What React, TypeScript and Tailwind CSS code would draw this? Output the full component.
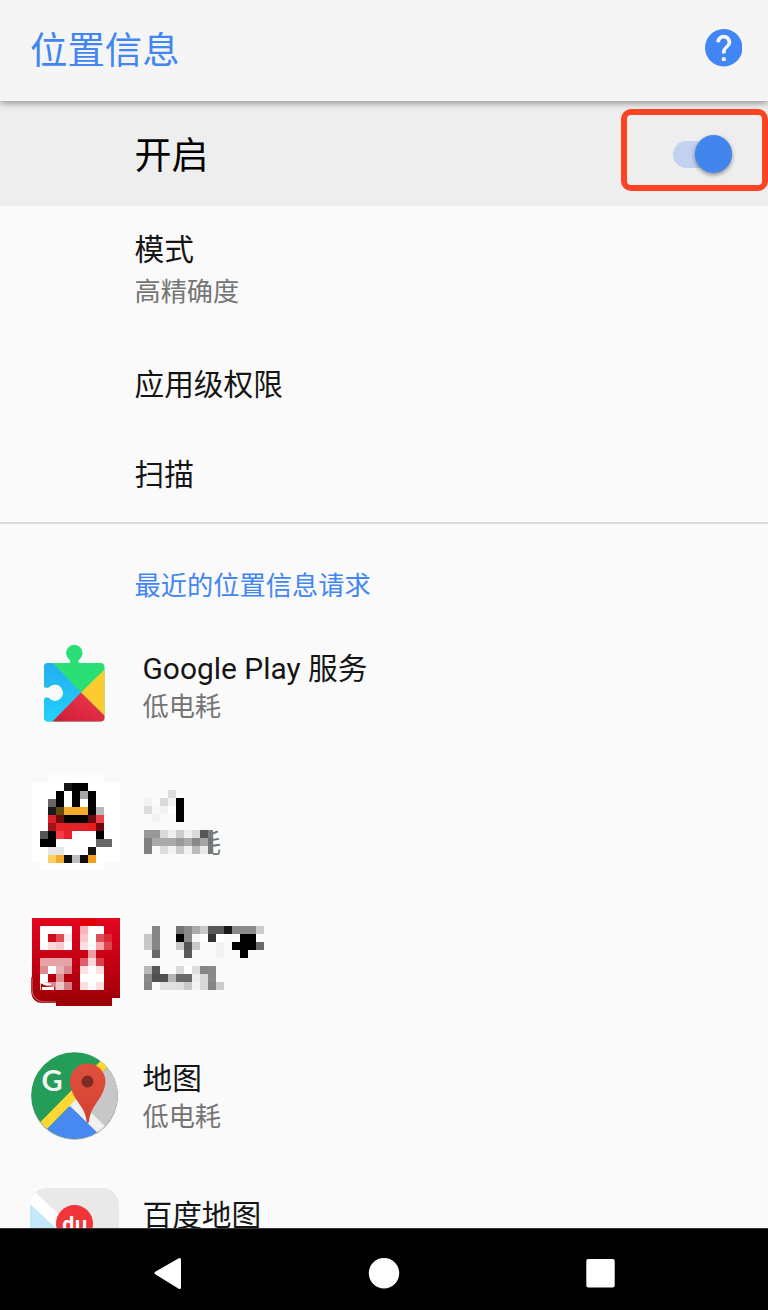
import React from "react";

type Cell = [number, string, number?];

/* Each row lists [column, colour, span] blocks on an 8px lattice. */
function Mosaic({ rows, cols }: { rows: Cell[][]; cols: number }) {
  return (
    <svg
      width={cols * 8}
      height={rows.length * 8}
      viewBox={`0 0 ${cols} ${rows.length}`}
      shapeRendering="crispEdges"
      className="block"
    >
      {rows.map((row, y) =>
        row.map(([x, fill, span = 1], i) => (
          <rect key={`${y}-${i}`} x={x} y={y} width={span} height={1} fill={fill} />
        )),
      )}
    </svg>
  );
}

const penguin: Cell[][] = [
  [[2, "#fefefe", 7]],
  [[0, "#fff", 11], [4, "#151515"], [5, "#000", 2]],
  [[0, "#fff", 11], [3, "#000"], [5, "#000"], [6, "#a5a5a5"], [7, "#000"]],
  [[0, "#fff", 11], [2, "#666"], [3, "#000"], [5, "#000"], [7, "#000"]],
  [[0, "#fff", 11], [2, "#1a1a1a"], [3, "#604a12"], [4, "#f5ab2b", 3], [7, "#000"], [8, "#b8b8b8"]],
  [[0, "#fff", 11], [2, "#dc2029"], [3, "#6a0b10"], [4, "#000", 3], [7, "#6a0b10"], [8, "#ee4148"]],
  [[0, "#fff", 11], [2, "#a31119"], [3, "#e4222a", 4], [7, "#f0181f"], [8, "#6f090d"]],
  [[0, "#fff", 11], [1, "#555"], [2, "#000"], [3, "#f23c48"], [4, "#e8202c"], [8, "#000"]],
  [[0, "#fff", 11], [1, "#000", 2], [8, "#686868", 2]],
  [[0, "#fff", 11], [2, "#e5e5e5", 2], [7, "#151515"]],
  [[0, "#fff", 11], [2, "#fbd064"], [3, "#f5ab2b"], [4, "#101010"], [5, "#bdbdbd"], [6, "#101010"], [7, "#f5a01b"]],
  [[1, "#fff", 8]],
];

const penguinTitle: Cell[][] = [
  [[3, "#dcdcdc"]],
  [[0, "#f3f3f3"], [2, "#dadada"], [3, "#f3f3f3"], [4, "#000"]],
  [[0, "#dcdcdc"], [1, "#f7f7f7"], [2, "#f3f3f3"], [3, "#fff"], [4, "#000"]],
  [[1, "#f3f3f3"], [4, "#000"]],
];

const penguinSub: Cell[][] = [
  [[0, "#989898", 2], [2, "#d8d8d8"], [3, "#eee"], [4, "#ccc"], [5, "#eee"], [6, "#dadada"], [7, "#565656"], [8, "#7e7e7e"]],
  [[0, "#808080"], [1, "#aaa", 3], [4, "#989898"], [5, "#aaa"], [6, "#898989"], [7, "#a5a5a5"], [8, "#757575"]],
  [[0, "#808080"], [1, "#fafafa"], [2, "#dcdcdc"], [3, "#f3f3f3"], [4, "#ccc"], [5, "#f0f0f0"], [6, "#bbb"], [7, "#e8e8e8"], [8, "#777"]],
];

const redTitle: Cell[][] = [
  [[1, "#858585"], [4, "#737373"], [5, "#8a8a8a"], [6, "#aaa"], [7, "#c8c8c8"], [8, "#575757", 2], [10, "#181818"], [11, "#8a8a8a", 3], [14, "#ccc"]],
  [[0, "#c8c8c8"], [1, "#858585"], [4, "#000"], [5, "#8a8a8a"], [6, "#f7f7f7"], [7, "#fff"], [8, "#353535"], [9, "#fff"], [12, "#000", 2]],
  [[0, "#c8c8c8"], [1, "#858585"], [4, "#c8c8c8"], [5, "#555"], [6, "#c8c8c8"], [9, "#f3f3f3"], [11, "#000", 3], [14, "#686868"]],
  [[1, "#686868"], [5, "#5a5a5a"], [9, "#f3f3f3"], [12, "#000"]],
];

const redSub: Cell[][] = [
  [[0, "#b8b8b8"], [1, "#575757"], [4, "#dadada"], [5, "#fff"], [6, "#dedede"], [7, "#858585"], [8, "#8a8a8a"]],
  [[0, "#8a8a8a"], [1, "#505050", 2], [3, "#b5b5b5"], [4, "#696969", 2], [6, "#eee"], [7, "#d8d8d8"], [8, "#8a8a8a"]],
  [[0, "#858585"], [2, "#e0e0e0", 2], [4, "#dedede"], [5, "#c8c8c8"], [6, "#f3f3f3"], [7, "#d8d8d8"], [8, "#858585"], [9, "#ccc"]],
];

const seal: Cell[][] = [
  [[6, "#e0000a", 2]],
  [[1, "#fff", 4], [6, "#f5b5ba"], [7, "#fff", 2]],
  [[1, "#fff"], [2, "#cf0c18"], [3, "#df4b54"], [4, "#fdeaec"], [6, "#f8c8cb"], [7, "#fff"], [8, "#df4b58"], [9, "#dc2835"]],
  [[1, "#fff"], [2, "#fbdadd"], [3, "#f7ccd0"], [4, "#fff"], [6, "#fce0e2"], [7, "#fff"], [8, "#f3a9ae"], [9, "#dd4450"]],
  [[7, "#ec9ba1"]],
  [[1, "#e6a3a7", 4], [6, "#df606a"], [7, "#f7d9db"], [8, "#d8404c"]],
  [[1, "#dc8b90"], [2, "#fff"], [3, "#e8b0b3"], [4, "#d8878c"], [6, "#fbdfe1"], [7, "#fff"], [8, "#fbdfe1"]],
  [[1, "#fff"], [2, "#b4000a"], [3, "#dc8b90"], [4, "#b4000a"], [6, "#fff", 3]],
  [[1, "#edc9cb"], [2, "#dc8b90"], [3, "#edc9cb"], [4, "#d47d82"], [6, "#f9dfe0"], [7, "#fff"], [8, "#f9dfe0"]],
];

function PlayServicesIcon() {
  return (
    <svg width="88" height="88" viewBox="0 0 88 88" className="block">
      <defs>
        <clipPath id="piece">
          <path d="M16 23h20.500c2 0 2.300-1.800 1-3.300a8.200 8.200 0 1 1 9.600 0c-1.300 1.500-1 3.300 1 3.300H68.500a4 4 0 0 1 4 4v50.500a4 4 0 0 1-4 4H16a4 4 0 0 1-4-4V60c0-2 1.500-2.500 4.500-2.200a8.200 8.200 0 1 0 0-10.200C13.500 48 12 47.500 12 45.500V27a4 4 0 0 1 4-4z" />
        </clipPath>
        <linearGradient id="blue" x1="0" y1="0" x2="0" y2="1">
          <stop offset="0" stopColor="#27a5ef" />
          <stop offset="1" stopColor="#20d9ff" />
        </linearGradient>
        <linearGradient id="red" x1="1" y1="0" x2="0" y2="1">
          <stop offset="0" stopColor="#f63b4c" />
          <stop offset="1" stopColor="#c91938" />
        </linearGradient>
      </defs>
      <g clipPath="url(#piece)">
        <path d="M0 0h88v88H0z" fill="#2adf76" />
        <path d="M10 12l39 40.500-39 41z" fill="url(#blue)" />
        <path d="M49 52.500L76 26v53z" fill="#fccb30" />
        <path d="M49 52.500L20 82v6h62v-3z" fill="url(#red)" />
      </g>
    </svg>
  );
}

function SealIcon() {
  return (
    <svg width="90" height="92" viewBox="-2 0 90 92" className="block">
      <defs>
        <linearGradient id="seal" x1="0" y1="0" x2="0" y2="1">
          <stop offset="0" stopColor="#e2071f" />
          <stop offset="0.500" stopColor="#c50014" />
          <stop offset="1" stopColor="#990005" />
        </linearGradient>
      </defs>
      <path d="M0 0h88v80h-8v8H24v-3H11Q-1 85-1 71V60l1-1z" fill="url(#seal)" />
      <path d="M-.5 48v11M0 60v12q1 12 14 12h10" fill="none" stroke="#efd7d7" strokeWidth=".5" />
      <g transform="scale(8)" shapeRendering="crispEdges">
        {seal.map((row, y) =>
          row.map(([x, fill, span = 1], i) => (
            <rect key={`${y}-${i}`} x={x} y={y} width={span} height={1} fill={fill} />
          )),
        )}
      </g>
      <path d="M9 65q5 4 14 4v4H9z" fill="#b4000a" />
      <path d="M10 69h12v3H10z" fill="#fff" />
      <path d="M8 64q5 3 11 2" fill="none" stroke="#fff" strokeWidth="1.500" />
    </svg>
  );
}

function MapsIcon() {
  return (
    <svg width="88" height="90" viewBox="0 0 88 90" className="block">
      <defs>
        <clipPath id="disc">
          <circle cx="43.500" cy="43.500" r="43.300" />
        </clipPath>
        <linearGradient id="pin" x1="0" y1="0" x2="0" y2="1">
          <stop offset="0" stopColor="#e0503f" />
          <stop offset="1" stopColor="#d5402f" />
        </linearGradient>
      </defs>
      <circle cx="43.500" cy="44.600" r="43.300" fill="#b4b9bf" />
      <g clipPath="url(#disc)">
        <path d="M0 0h88v88H0z" fill="#239d58" />
        <path d="M76 16l14-10v80H74L40 50z" fill="#c7c7c7" />
        <path d="M44 45l-8 8 32 34 10-9z" fill="#f0f0f0" />
        <path d="M39 54L12 81v9h64z" fill="#4889f1" />
        <path d="M6 73.500L73 5.500l7 6L14 79z" fill="#fdd835" />
      </g>
      <text x="10.500" y="38.500" fontSize="29" className="font-[Lato,sans-serif] font-bold" fill="#f4f5f4">G</text>
      <path d="M55.700 70c-.7-6-2.200-10-5-14.500C46 48 39 40 39 29.200a17.700 17.700 0 0 1 35.400 0C74.400 40 67 48 62.500 55.500 60 60 58.600 64 57.800 70c-.2 1.200-1.900 1.200-2.100 0z" fill="url(#pin)" />
      <circle cx="56.500" cy="29.500" r="6" fill="#7e2c28" />
    </svg>
  );
}

function BaiduIcon() {
  return (
    <svg width="90" height="41" viewBox="0 0 90 41" className="block">
      <defs>
        <clipPath id="tile">
          <rect width="89" height="90" rx="17" />
        </clipPath>
      </defs>
      <g clipPath="url(#tile)">
        <path d="M0 0h90v41H0z" fill="#e9e9e9" />
        <path d="M0 14l27 27H0z" fill="#c3e8fc" />
        <path d="M0-1l6 6 30 28-6 8h-3L0 16z" fill="#fff" />
      </g>
      <circle cx="44.500" cy="35.500" r="18.500" fill="#f4343b" />
      <text x="44.800" y="42.500" textAnchor="middle" fontSize="20" className="font-['Open_Sans',sans-serif] font-bold" fill="#fff">du</text>
    </svg>
  );
}

function AppRow({ icon, children }: { icon: React.ReactNode; children: React.ReactNode }) {
  return (
    <div className="flex h-[136.500px] shrink-0 items-start">
      <div className="w-[142.500px] shrink-0">{icon}</div>
      <div>{children}</div>
    </div>
  );
}

const titleText = "h-[40px] text-[29.700px] leading-[40px] whitespace-nowrap text-[#151515]";
const subText = "h-[36px] text-[26.200px] leading-[36px] whitespace-nowrap text-[#757575]";

export default function App() {
  return (
    <div className="flex h-[1310px] w-[768px] flex-col overflow-hidden bg-[#fafafa] font-['Noto_Sans_CJK_SC',sans-serif]">
      <header className="relative z-10 flex h-[101px] shrink-0 items-center justify-between bg-[#f5f5f5] pr-[26px] pb-[5px] pl-[30px] shadow-[0_2px_7px_rgba(0,0,0,0.4)]">
        <h1 className="mt-[-1px] text-[37.400px] leading-[54px] text-[#4285f4]">位置信息</h1>
        <svg width="37.500" height="37.500" viewBox="2 2 20 20" className="block">
          <path
            fill="#4285f4"
            d="M12 2C6.480 2 2 6.480 2 12s4.480 10 10 10 10-4.480 10-10S17.520 2 12 2z"
          />
          <path
            fill="#f5f5f5"
            d="M13 19h-2v-2h2v2zm2.070-7.750l-.9.920C13.450 12.900 13 13.500 13 15h-2v-.5c0-1.100.450-2.100 1.170-2.830l1.240-1.260c.370-.360.590-.860.590-1.410 0-1.100-.9-2-2-2s-2 .9-2 2H8c0-2.210 1.790-4 4-4s4 1.790 4 4c0 .880-.360 1.680-.930 2.250z"
          />
        </svg>
      </header>

      <section className="flex h-[105px] shrink-0 items-center justify-between bg-[#eeeeee] pl-[134.500px]">
        <span className="mt-[-1px] text-[37px] leading-[54px] text-black">开启</span>
        <div className="mt-[-7px] flex h-[82px] w-[147px] items-center rounded-[10px] border-[6px] border-[#fc4423] pt-[8px] pl-[46px]">
          <div className="flex h-[27px] w-[59px] items-center justify-end rounded-full bg-[#c1d1ef]">
            <div className="size-[37.500px] shrink-0 rounded-full bg-[#4285ec] shadow-[0_2px_4px_rgba(0,0,0,0.4)]" />
          </div>
        </div>
      </section>

      <section className="flex h-[318px] shrink-0 flex-col border-b-2 border-[#dadada] pt-[22px] pl-[134.500px]">
        <div className={titleText}>模式</div>
        <div className="pt-[4px]">
          <div className={subText}>高精确度</div>
        </div>
        <div className="pt-[55px]">
          <div className={titleText}>应用级权限</div>
        </div>
        <div className="pt-[50px]">
          <div className={titleText}>扫描</div>
        </div>
      </section>

      <section className="flex h-[704px] shrink-0 flex-col overflow-hidden">
        <h2 className="h-[114px] shrink-0 pt-[41px] pl-[134.500px] text-[26.250px] leading-[38px] text-[#4285f4]">
          最近的位置信息请求
        </h2>
        <AppRow icon={<div className="pt-[2px] pl-[32px]"><PlayServicesIcon /></div>}>
          <div className="pt-[9px]">
            <div className={titleText}>
              <span className="font-[Roboto,sans-serif] text-[29.900px]">Google Play </span>服务
            </div>
            <div className={subText}>低电耗</div>
          </div>
        </AppRow>
        <AppRow icon={<div className="pl-[32px]"><Mosaic rows={penguin} cols={11} /></div>}>
          <div className="pt-[15.500px] pl-[1.500px]">
            <Mosaic rows={penguinTitle} cols={9} />
            <div className="relative mt-[2px] h-[36px]">
              <div className="ml-[-1.500px] text-[26.200px] leading-[36px] text-[#757575]">低电耗</div>
              <div className="absolute top-[-2px] left-[-2px] h-[38px] w-[71px] overflow-hidden bg-[#fafafa] pt-[8px] pl-[2px]">
                <Mosaic rows={penguinSub} cols={9} />
              </div>
            </div>
          </div>
        </AppRow>
        <AppRow icon={<div className="pt-[6.500px] pl-[30px]"><SealIcon /></div>}>
          <div className="pt-[14.500px] pl-[1.500px]">
            <Mosaic rows={redTitle} cols={15} />
            <div className="pt-[8px]">
              <Mosaic rows={redSub} cols={10} />
            </div>
          </div>
        </AppRow>
        <AppRow icon={<div className="pt-[4px] pl-[31px]"><MapsIcon /></div>}>
          <div className="pt-[9px]">
            <div className={titleText}>地图</div>
            <div className={subText}>低电耗</div>
          </div>
        </AppRow>
        <AppRow icon={<div className="pt-[4px] pl-[30px]"><BaiduIcon /></div>}>
          <div className="pt-[9.500px]">
            <div className={titleText}>百度地图</div>
          </div>
        </AppRow>
      </section>

      <nav className="flex h-[82px] w-full shrink-0 items-center border-t border-[#333] bg-black">
        <svg width="768" height="81" viewBox="0 1229 768 81" className="block">
          <path
            d="M156 1273l23.500-13.500v28z"
            fill="#fff"
            stroke="#fff"
            strokeWidth="3"
            strokeLinejoin="round"
          />
          <circle cx="384" cy="1273.300" r="15.200" fill="#fff" />
          <rect x="586.300" y="1259" width="28.400" height="28.500" rx="2" fill="#fff" />
        </svg>
      </nav>
    </div>
  );
}
